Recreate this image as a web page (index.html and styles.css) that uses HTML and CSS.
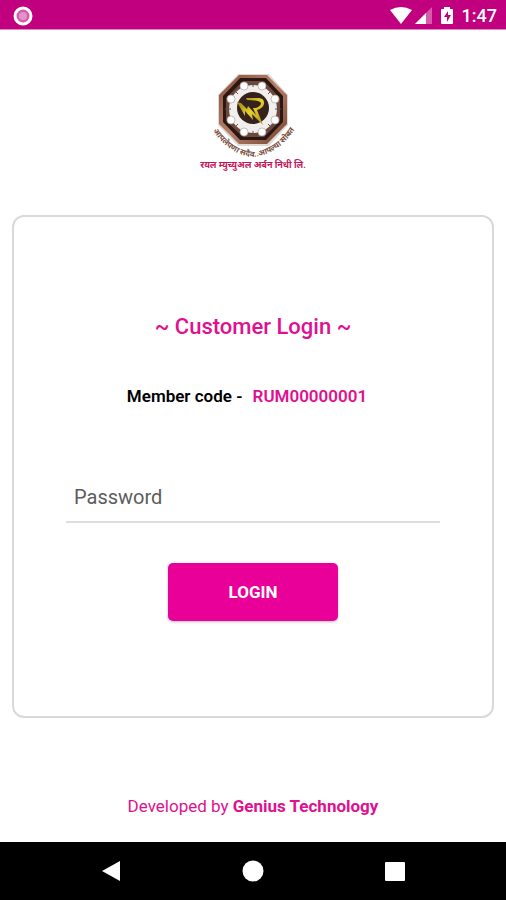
FILE: index.html
```html
<!DOCTYPE html>
<html lang="en">
<head>
<meta charset="utf-8">
<meta name="viewport" content="width=device-width, initial-scale=1">
<title>Customer Login</title>
<link rel="stylesheet" href="styles.css">
</head>
<body>
<header class="status">
  <svg class="status-app" viewBox="0 0 20 20" aria-hidden="true"><circle cx="10" cy="10" r="8" fill="#d65bac" stroke="#fff" stroke-width="3"/><circle cx="10" cy="10" r="4" fill="#e294c8"/></svg>
  <div class="status-right">
    <svg class="status-icons" viewBox="0 0 66 20" aria-hidden="true">
      <path d="M0 4Q11-2 22 4L11 18Z" fill="#fff"/>
      <path d="M42 1V18H25Z" fill="#d65bac"/><path d="M36 7V18H25Z" fill="#fff"/>
      <path d="M54 1H60V3H62Q63 3 63 4V17Q63 18 62 18H52Q51 18 51 17V4Q51 3 52 3H54Z" fill="#fff"/>
      <path d="M58 5L54 11H57V16L61 9H58Z" fill="#c1007f"/>
    </svg>
    <span class="time">1:47</span>
  </div>
</header>
<main class="screen">
  <svg class="logo" viewBox="0 0 126 112" role="img" aria-label="रयल म्युच्युअल अर्बन निधी लि.">
    <defs>
      <path id="motto" d="M20 60Q35 89 63 92Q91 89 108 59"/>
      <linearGradient id="wood" x2="1" y2="1"><stop offset="0" stop-color="#85523f"/><stop offset=".5" stop-color="#b78068"/><stop offset="1" stop-color="#75432f"/></linearGradient>
      <linearGradient id="gold" x2="1" y2="1"><stop offset="0" stop-color="#8b7512"/><stop offset=".5" stop-color="#e7cf2c"/><stop offset="1" stop-color="#a78b18"/></linearGradient>
    </defs>
    <path d="M48 9H79L98 30V60L79 81H48L28 60V30Z" fill="#dedad8"/>
    <path d="M49 10H77L97 30V59L77 79H49L29 59V30Z" fill="url(#wood)"/>
    <path d="M50 13H76L93 31V57L76 75H50L33 57V31Z" fill="#2c1712"/>
    <path d="M53 16H74L90 33V56L74 72H53L36 56V33Z" fill="#6b4a3d"/>
    <circle cx="63" cy="44" r="24" fill="#f1efed"/>
    <g stroke="#655047" stroke-width="1"><path d="M63 16V22M82 25L78 29M91 44H85M82 63L78 59M63 72V66M44 63L48 59M35 44H41M44 25L48 29"/></g>
    <g fill="#fff" stroke="#a39891" stroke-width=".6">
      <circle cx="54" cy="21" r="4"/><circle cx="72" cy="21" r="4"/><circle cx="85" cy="34" r="4"/><circle cx="85" cy="55" r="4"/><circle cx="72" cy="67" r="4"/><circle cx="54" cy="67" r="4"/><circle cx="41" cy="55" r="4"/><circle cx="41" cy="34" r="4"/>
    </g>
    <circle cx="63" cy="43" r="16" fill="#35221c"/>
    <path d="M56 33H69Q75 34 74 39Q73 43 67 45L73 60L62 49L63 55L55 46V51L47 37L51 38L57 44L58 41L66 50L63 43H66Q71 41 71 38Q69 35 57 35Z" fill="url(#gold)"/>
    <text class="motto"><textPath href="#motto" startOffset="50%" text-anchor="middle">आपलेपणा सदैव..आपल्या सोबत</textPath></text>
    <text class="brand" x="63" y="103" text-anchor="middle">रयल म्युच्युअल अर्बन निधी लि.</text>
  </svg>
  <form class="card">
    <h1 class="title">~ Customer Login ~</h1>
    <p class="member">Member code - <span class="code">RUM00000001</span></p>
    <input class="password" type="password" placeholder="Password" aria-label="Password">
    <button class="login" type="button">LOGIN</button>
  </form>
  <p class="credit">Developed by <strong>Genius Technology</strong></p>
</main>
<nav class="nav" aria-label="System">
  <button class="nav-button" type="button" aria-label="Back"><svg viewBox="0 0 22 22"><path d="M2 11L20 1V21Z"/></svg></button>
  <button class="nav-button" type="button" aria-label="Home"><svg viewBox="0 0 22 22"><circle cx="11" cy="11" r="10.5"/></svg></button>
  <button class="nav-button" type="button" aria-label="Recent apps"><svg viewBox="0 0 22 22"><rect x="1" y="2" width="20" height="19" rx="1"/></svg></button>
</nav>
</body>
</html>
```
FILE: styles.css
```css
* { box-sizing: border-box; }

body {
  margin: 0;
  min-height: 100vh;
  display: flex;
  flex-direction: column;
  background: #fff;
  color: #000;
  font-family: Roboto, "Noto Sans", sans-serif;
}

.status {
  display: flex;
  align-items: center;
  justify-content: space-between;
  height: 30px;
  padding: 2px 9px 0 13px;
  background: #c1007f;
  border-bottom: 1px solid #dd8abf;
}
.status-app { width: 20px; height: 20px; }
.status-right { display: flex; align-items: center; gap: 6px; }
.status-icons { width: 66px; height: 20px; }
.time {
  color: #fff;
  font-size: 18px;
  font-weight: 500;
  line-height: 26px;
}

.screen {
  flex: 1;
  display: flex;
  flex-direction: column;
  align-items: center;
  padding: 35px 12px 0;
}
.logo { width: 126px; height: 112px; }
.motto {
  fill: #79503e;
  font-size: 8px;
  font-weight: 700;
}
.brand {
  fill: #c4175b;
  font-size: 9px;
  font-weight: 700;
}

.card {
  align-self: stretch;
  display: flex;
  flex-direction: column;
  align-items: center;
  margin-top: 38px;
  padding: 97px 52px 95px;
  border: 2px solid #d9d9d9;
  border-radius: 12px;
}
.title {
  margin: 0;
  color: #e0108f;
  font-size: 22px;
  font-weight: 500;
  line-height: 26px;
}
.member {
  margin: 46px 0 0;
  padding-right: 12px;
  font-size: 17px;
  font-weight: 600;
  line-height: 20px;
}
.code { margin-left: 6px; color: #e0108f; }
.password {
  width: 100%;
  height: 50px;
  margin-top: 67px;
  padding: 0 8px;
  border: 0;
  border-bottom: 2px solid #dedede;
  border-radius: 0;
  outline: 0;
  background: transparent;
  font: 400 20px Roboto, sans-serif;
}
.password::placeholder { color: #5c5c5c; opacity: 1; }
.login {
  width: 170px;
  height: 58px;
  margin-top: 40px;
  border: 0;
  border-radius: 5px;
  background: #e90099;
  box-shadow: 0 1px 3px #0004;
  color: #fff;
  font: 700 17px Roboto, sans-serif;
}

.credit {
  margin: 78px 0 0;
  color: #e0108f;
  font-size: 17px;
  line-height: 20px;
}
.credit strong { font-weight: 700; }

.nav {
  display: flex;
  justify-content: center;
  gap: 120px;
  height: 58px;
  background: #000;
}
.nav-button {
  display: flex;
  align-items: center;
  padding: 0;
  border: 0;
  background: transparent;
}
.nav-button svg { width: 22px; height: 22px; fill: #fff; }
```
